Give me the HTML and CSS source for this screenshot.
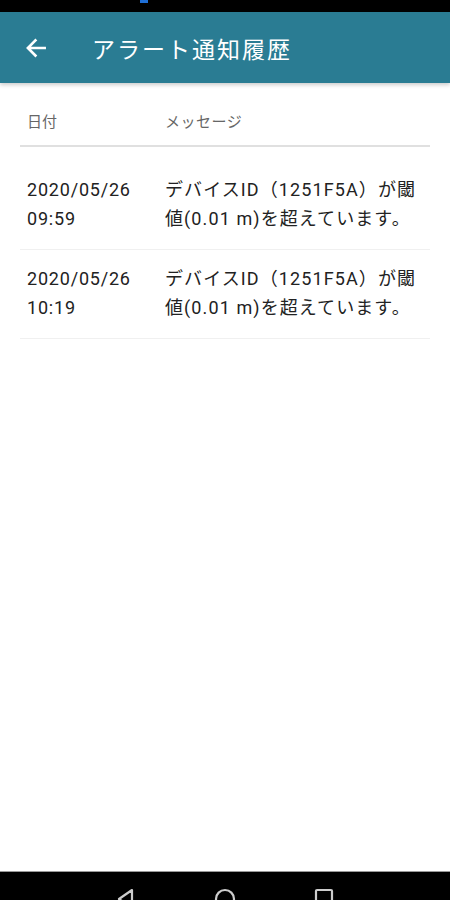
FILE: index.html
```html
<!DOCTYPE html>
<html lang="ja">
<head>
    <meta charset="UTF-8">
    <meta name="viewport" content="width=device-width, initial-scale=1.0">
    <title>アラート通知履歴</title>
    <link rel="stylesheet" href="styles.css">
</head>
<body>
    <div class="screen">
        <div class="status-bar"><span class="status-dot"></span></div>

        <header class="app-bar">
            <button class="back-button" aria-label="戻る">
                <svg width="24" height="24" viewBox="0 0 24 24">
                    <path d="M20 12H5M11.5 5L4.5 12l7 7" fill="none" stroke="#fff" stroke-width="2.4" stroke-linecap="square"/>
                </svg>
            </button>
            <h1 class="app-title">アラート通知履歴</h1>
        </header>

        <main class="content">
            <div class="alert-table">
                <div class="table-head">
                    <div class="cell cell-date">日付</div>
                    <div class="cell cell-message">メッセージ</div>
                </div>
                <div class="table-body">
                    <div class="table-row">
                        <div class="cell cell-date">2020/05/26<br>09:59</div>
                        <div class="cell cell-message">デバイスID（1251F5A）が閾値(0.01 m)を超えています。</div>
                    </div>
                    <div class="table-row">
                        <div class="cell cell-date">2020/05/26<br>10:19</div>
                        <div class="cell cell-message">デバイスID（1251F5A）が閾値(0.01 m)を超えています。</div>
                    </div>
                </div>
            </div>
        </main>

        <nav class="nav-bar">
            <svg class="nav-icon" width="20" height="22" viewBox="0 0 20 22">
                <path d="M16 2L3 11l13 9z" fill="none" stroke="#ccc" stroke-width="2.2" stroke-linejoin="round"/>
            </svg>
            <svg class="nav-icon" width="22" height="22" viewBox="0 0 22 22">
                <circle cx="11" cy="11" r="9" fill="none" stroke="#ccc" stroke-width="2.2"/>
            </svg>
            <svg class="nav-icon" width="20" height="22" viewBox="0 0 20 22">
                <rect x="2" y="2" width="16" height="18" rx="1" fill="none" stroke="#ccc" stroke-width="2.2"/>
            </svg>
        </nav>
    </div>
</body>
</html>
```

FILE: styles.css
```css
html, body {
    margin: 0;
    padding: 0;
    height: 100%;
    overflow: hidden;
}

body {
    font-family: Roboto, "Noto Sans CJK JP", sans-serif;
    background-color: #fff;
    color: #222;
}

.screen {
    display: flex;
    flex-direction: column;
    height: 900px;
}

.status-bar {
    height: 12px;
    background: #000;
    flex-shrink: 0;
}

.status-dot {
    display: block;
    width: 8px;
    height: 3px;
    margin-left: 140px;
    background: #1f6fd6;
}

.app-bar {
    height: 71px;
    flex-shrink: 0;
    display: flex;
    align-items: center;
    background: #2a7c93;
    box-shadow: 0 2px 4px rgba(0, 0, 0, 0.2);
    position: relative;
    z-index: 1;
}

.back-button {
    width: 32px;
    height: 32px;
    margin-left: 20px;
    padding: 0;
    border: none;
    background: none;
    display: flex;
    align-items: center;
    justify-content: center;
    cursor: pointer;
}

.back-button svg {
    width: 26px;
    height: 26px;
}

.app-title {
    margin: 0 0 0 40px;
    font-family: "Noto Sans CJK JP", sans-serif;
    font-size: 23px;
    font-weight: 400;
    letter-spacing: 2px;
    color: #fff;
}

.content {
    flex: 1;
    padding: 0 20px;
}

.table-head {
    display: flex;
    padding: 29px 0 13px;
    border-bottom: 2px solid #e0e0e0;
    font-size: 15px;
    line-height: 20px;
    color: #666;
}

.table-body {
    padding-top: 14px;
}

.table-row {
    display: flex;
    padding: 14px 0 16px;
    border-bottom: 1px solid #f0f0f0;
    font-size: 18px;
    line-height: 29px;
    letter-spacing: 0.8px;
}

.cell {
    padding-left: 7px;
}

.cell-date {
    width: 131px;
    flex-shrink: 0;
}

.cell-message {
    flex: 1;
    padding-right: 5px;
}

.table-row .cell-message {
    letter-spacing: 1.1px;
}

.table-head .cell-message {
    letter-spacing: 0.5px;
}

.nav-bar {
    height: 29px;
    flex-shrink: 0;
    background: #000;
    border-top: 1px solid #999;
    display: flex;
    justify-content: center;
    align-items: flex-start;
    gap: 78px;
    padding-top: 16px;
    overflow: hidden;
    box-sizing: border-box;
}

.nav-icon {
    flex-shrink: 0;
}
```
